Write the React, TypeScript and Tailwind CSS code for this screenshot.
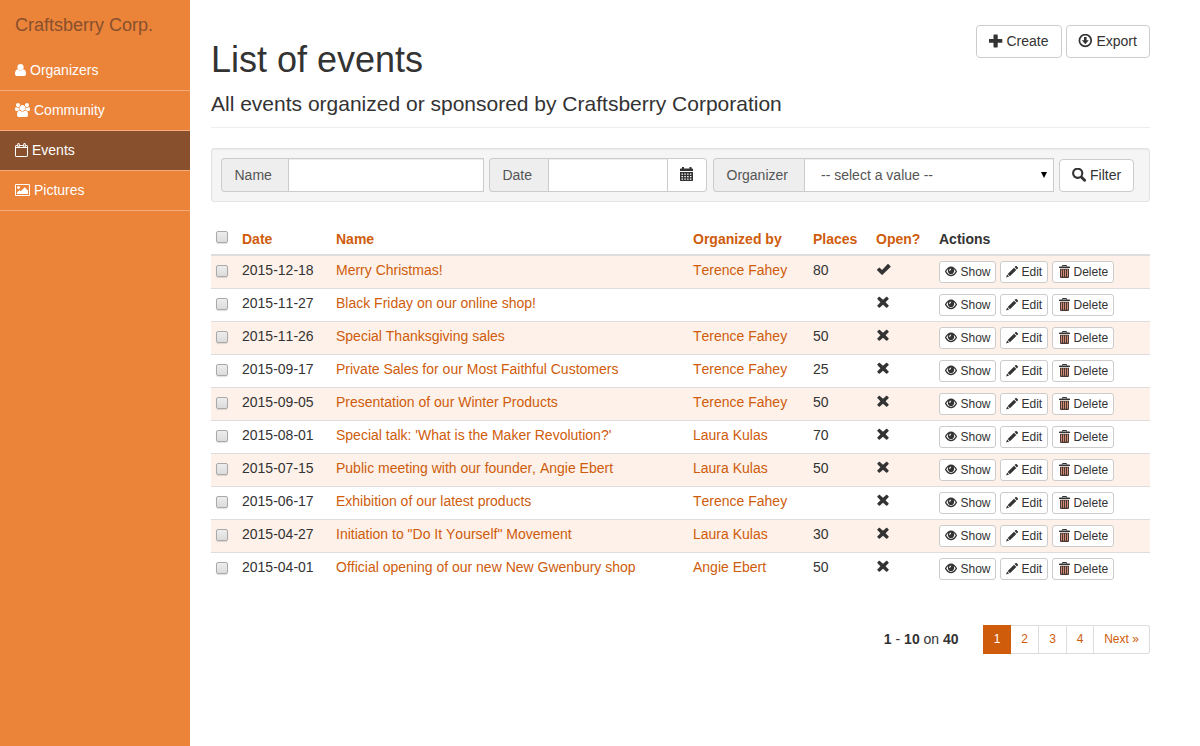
import React from "react";

type Event = { date: string; name: string; by: string; places: string; open?: boolean };

const events: Event[] = [
  { date: "2015-12-18", name: "Merry Christmas!", by: "Terence Fahey", places: "80", open: true },
  { date: "2015-11-27", name: "Black Friday on our online shop!", by: "", places: "" },
  { date: "2015-11-26", name: "Special Thanksgiving sales", by: "Terence Fahey", places: "50" },
  { date: "2015-09-17", name: "Private Sales for our Most Faithful Customers", by: "Terence Fahey", places: "25" },
  { date: "2015-09-05", name: "Presentation of our Winter Products", by: "Terence Fahey", places: "50" },
  { date: "2015-08-01", name: "Special talk: 'What is the Maker Revolution?'", by: "Laura Kulas", places: "70" },
  { date: "2015-07-15", name: "Public meeting with our founder, Angie Ebert", by: "Laura Kulas", places: "50" },
  { date: "2015-06-17", name: "Exhibition of our latest products", by: "Terence Fahey", places: "" },
  { date: "2015-04-27", name: "Initiation to \"Do It Yourself\" Movement", by: "Laura Kulas", places: "30" },
  { date: "2015-04-01", name: "Official opening of our new New Gwenbury shop", by: "Angie Ebert", places: "50" },
];

const UserIcon = () => (
  <svg viewBox="0 0 11 14" className="h-[14px] w-[11px] shrink-0" fill="currentColor">
    <circle cx="5.500" cy="4.200" r="3.100" />
    <path d="M2.700 6.300Q3.900 7.600 5.500 7.600T8.300 6.300Q11 6.600 11 11Q11 13 9.200 13H1.800Q0 13 0 11Q0 6.600 2.700 6.300z" />
  </svg>
);

const UsersIcon = () => (
  <svg viewBox="0 0 1920 1792" className="h-[14px] w-[15px] shrink-0" fill="currentColor">
    <path d="M593 896q-162 5-265 128h-134q-82 0-138-40.5t-56-118.5q0-353 124-353 6 0 43.5 21t97.5 42.5 119 21.5q67 0 133-23-5 37-5 66 0 139 81 256zm1071 637q0 120-73 189.5t-194 69.5h-874q-121 0-194-69.5t-73-189.5q0-53 3.5-103.5t14-109 26.5-108.5 43-97.5 62-81 85.5-53.5 111.5-20q10 0 43 21.5t73 48 107 48 135 21.5 135-21.5 107-48 73-48 43-21.5q61 0 111.5 20t85.5 53.5 62 81 43 97.5 26.5 108.5 14 109 3.5 103.5zm-1024-1277q0 106-75 181t-181 75-181-75-75-181 75-181 181-75 181 75 75 181zm704 384q0 159-112.5 271.5t-271.5 112.5-271.5-112.5-112.5-271.500 112.5-271.500 271.5-112.500 271.5 112.5 112.500 271.500zm576 225q0 78-56 118.5t-138 40.5h-134q-103-123-265-128 81-117 81-256 0-29-5-66 66 23 133 23 59 0 119-21.5t97.5-42.5 43.5-21q124 0 124 353zm-128-609q0 106-75 181t-181 75-181-75-75-181 75-181 181-75 181 75 75 181z" />
  </svg>
);

const CalendarOIcon = () => (
  <svg viewBox="0 0 13 14" className="h-[14px] w-[13px] shrink-0" fill="none" stroke="currentColor">
    <rect x="0.5" y="2.5" width="12" height="11" rx="0.6" />
    <path d="M0.500 4.500H12.500" />
    <path d="M3.500 1.200V3.500M9.500 1.200V3.500" strokeWidth="2.400" strokeLinecap="round" />
    <path d="M3.500 1.200V3.500M9.500 1.200V3.500" stroke="#88502d" strokeWidth="0.700" />
  </svg>
);

const PictureIcon = () => (
  <svg viewBox="0 0 1920 1792" className="h-[14px] w-[15px] shrink-0" fill="currentColor">
    <path d="M640 576q0 80-56 136t-136 56-136-56-56-136 56-136 136-56 136 56 56 136zm1024 384v448h-1408v-192l320-320 160 160 512-512zm96-704h-1600q-13 0-22.5 9.5t-9.5 22.5v1216q0 13 9.5 22.5t22.5 9.500h1600q13 0 22.500-9.500t9.500-22.500v-1216q0-13-9.500-22.500t-22.500-9.500zm160 32v1216q0 66-47 113t-113 47h-1600q-66 0-113-47t-47-113v-1216q0-66 47-113t113-47h1600q66 0 113 47t47 113z" />
  </svg>
);

const PlusIcon = () => (
  <svg viewBox="0 0 14 14" className="h-[14px] w-[14px] shrink-0" fill="currentColor">
    <path d="M5.100 .5h3q.6 0 .6.600v3.900h4q.6 0 .6.600v2.600q0 .6-.6.600h-4v4q0 .6-.6.600h-3q-.6 0-.6-.6v-4h-4q-.6 0-.6-.6v-2.600q0-.6.6-.6h4v-3.900q0-.6.6-.6z" />
  </svg>
);

const DownloadIcon = () => (
  <svg viewBox="0 0 14 14" className="h-[14px] w-[14px] shrink-0">
    <circle cx="7.300" cy="6.500" r="5.900" fill="none" stroke="currentColor" strokeWidth="1.700" />
    <path d="M6 3h2.600v3.300h2.200L7.300 10.300 3.800 6.300h2.200z" fill="currentColor" />
  </svg>
);

const SearchIcon = () => (
  <svg viewBox="0 0 14 14" className="h-[14px] w-[14px] shrink-0" fill="none" stroke="currentColor">
    <circle cx="5.700" cy="5.300" r="4.600" strokeWidth="2.100" />
    <path d="M9.600 9.200L12.600 12.200" strokeWidth="2.900" strokeLinecap="round" />
  </svg>
);

const CalendarIcon = () => (
  <svg viewBox="0 0 14 14" className="h-[14px] w-[14px] shrink-0" fill="currentColor">
    <path d="M0 2.300q0-.8.8-.8H2V0h2v1.500h5.500V0h2v1.500h.7q.8 0 .8.800V4H0z" />
    <path fillRule="evenodd" d="M0 5h13v8.300q0 .7-.7.700H.7q-.7 0-.7-.7zM1.500 6.500v1.200h1.500V6.500zM4.300 6.500v1.200h1.500V6.500zM7.100 6.500v1.200h1.500V6.500zM9.900 6.500v1.200h1.500V6.500zM1.500 9v1.200h1.500V9zM4.300 9v1.200h1.500V9zM7.100 9v1.200h1.500V9zM9.900 9v1.200h1.500V9zM1.500 11.500v1.200h1.500v-1.200zM4.300 11.500v1.200h1.500v-1.200zM7.100 11.500v1.200h1.500v-1.200zM9.900 11.500v1.200h1.500v-1.200z" />
  </svg>
);

const OkIcon = () => (
  <svg viewBox="0 0 14 14" className="h-[14px] w-[15px]" fill="currentColor">
    <path d="M11.800 2.100L14 4.300q.3.300 0 .6L6 12.800q-.4.300-.8 0L.6 8.300q-.3-.4 0-.7l1.900-1.900q.4-.3.700 0l2.400 2.300 5.600-5.900q.3-.3.600 0z" />
  </svg>
);

const RemoveIcon = () => (
  <svg viewBox="0 0 14 14" className="h-[14px] w-[14px]" fill="currentColor">
    <path d="M3.600 1.800L7 4.800 10.400 1.800q.3-.2.600 0l1.700 1.700q.3.300 0 .6L9.600 7.300l3.100 3.100q.3.300 0 .6l-1.700 1.700q-.3.300-.6 0L7 9.700l-3.400 3q-.3.300-.6 0L1.300 11q-.3-.3 0-.6l3.100-3.100L1.300 4.100q-.3-.3 0-.6L3 1.800q.3-.2.600 0z" />
  </svg>
);

const EyeIcon = () => (
  <svg viewBox="0 0 12 12" className="h-[12px] w-[12px] shrink-0">
    <path d="M-.1 5.500Q2.400.4 6 .4T12.100 5.500Q9.400 10.300 6 10.300T-.1 5.500z" fill="currentColor" />
    <path d="M1.300 5.600Q2.100 3.800 3.300 2.900Q2.500 4.400 3 6Q3.900 8.200 6 8.200T9 6Q9.500 4.400 8.700 2.900Q9.900 3.800 10.700 5.600Q8.700 9 6 9T1.300 5.600z" fill="#fff" />
    <path d="M4.100 4.500Q4.400 2.700 6.200 2.500L6 3.600Q5.100 4 5.100 5.300z" fill="#fff" />
  </svg>
);

const PencilIcon = () => (
  <svg viewBox="0 0 12 12" className="h-[12px] w-[12px] shrink-0" fill="currentColor">
    <path d="M9.700 0q.4-.3.800 0l1.500 1.500q.3.400 0 .8l-1.100 1.100-2.300-2.300zM8 1.700l2.300 2.300-6.400 6.200L1.700 7.900zM1.200 8.600l1.900 2L0 11.600z" />
  </svg>
);

const TrashIcon = () => (
  <svg viewBox="0 0 12 14" className="mt-[-2px] h-[14px] w-[12px] shrink-0">
    <path d="M4.500 2.500V1.500h4V2.500" fill="none" stroke="currentColor" />
    <path d="M1 3.900V3l.7-.5h9.600l.7.500v.9z" fill="currentColor" />
    <path d="M2 4.800h9V13q0 .9-1 .9H3q-1 0-1-.9z" fill="#4a3832" />
    <path d="M3.500 5.500v7.200M5.500 5.500v7.200M7.500 5.500v7.200M9.500 5.500v7.200" stroke="#d08a76" strokeWidth="1" />
  </svg>
);

const nav = [
  { label: "Organizers", icon: <UserIcon /> },
  { label: "Community", icon: <UsersIcon /> },
  { label: "Events", icon: <CalendarOIcon />, active: true },
  { label: "Pictures", icon: <PictureIcon /> },
];

const Checkbox = () => (
  <span
    role="checkbox"
    aria-checked="false"
    className="block h-[12px] w-[12px] rounded-[2px] border border-[#a9a9a9] bg-linear-to-b from-[#ededed] to-[#dcdcdc] shadow-[0_1px_1px_rgba(0,0,0,0.12)]"
  />
);

const RowButton = ({ icon, label, width }: { icon: React.ReactNode; label: string; width: string }) => (
  <button
    className={`flex h-[22px] items-center gap-[3.500px] rounded-[3px] border border-[#ccc] bg-white pl-[5px] text-[12px] leading-[18px] whitespace-nowrap text-[#333] ${width}`}
  >
    {icon}
    {label}
  </button>
);

export default function App() {
  return (
    <div className="flex h-[746px] w-[1200px] overflow-hidden bg-white font-['Liberation_Sans',Arial,sans-serif] text-[14px] leading-5 text-[#333] [font-kerning:none]">
      <aside className="w-[190px] shrink-0 bg-[#eb8339] text-white">
        <div className="h-[51px] px-[15px] pt-[15px] text-[18px] leading-5 text-[#88502d]">Craftsberry Corp.</div>
        <nav>
          {nav.map((n) => (
            <a
              key={n.label}
              className={`flex h-10 items-center gap-1 border-b border-[#f6ab7a] px-[15px] pb-[2px] ${n.active ? "bg-[#88502d]" : ""}`}
            >
              {n.icon}
              {n.label}
            </a>
          ))}
        </nav>
      </aside>

      <main className="flex w-[960px] flex-col pl-[21px]">
        <header className="flex h-[128px] justify-between border-b border-[#eee]">
          <div className="pt-[40px]">
            <h1 className="text-[36px] leading-10">List of events</h1>
            <p className="mt-[9px] text-[21px] leading-[30px]">All events organized or sponsored by Craftsberry Corporation</p>
          </div>
          <div className="flex gap-1 pt-[25px]">
            <button className="flex h-[33px] w-[86px] items-center gap-1 rounded-[4px] border border-[#ccc] pb-px pl-[11.500px]">
              <PlusIcon />
              Create
            </button>
            <button className="flex h-[33px] w-[84px] items-center gap-1 rounded-[4px] border border-[#ccc] pb-px pl-[11.400px]">
              <DownloadIcon />
              Export
            </button>
          </div>
        </header>

        <form className="mt-5 flex h-[54px] rounded-[3px] border border-[#e3e3e3] bg-[#f5f5f5] p-[9px] text-[#555] shadow-[inset_0_1px_1px_rgba(0,0,0,0.05)]">
          <div className="flex h-[34px] w-[263px]">
            <label className="flex w-[67px] items-center rounded-l-[4px] border border-r-0 border-[#ccc] bg-[#eee] pl-[12.500px]">Name</label>
            <div className="flex-1 border border-[#ccc] bg-white shadow-[inset_0_1px_1px_rgba(0,0,0,0.075)]" />
          </div>
          <div className="ml-[5px] flex h-[34px] w-[218px]">
            <label className="flex w-[59px] items-center rounded-l-[4px] border border-r-0 border-[#ccc] bg-[#eee] pl-[12.400px]">Date</label>
            <div className="flex-1 border border-[#ccc] bg-white shadow-[inset_0_1px_1px_rgba(0,0,0,0.075)]" />
            <button type="button" aria-label="Pick a date" className="flex w-[39px] justify-center rounded-r-[4px] border border-l-0 border-[#ccc] bg-white pt-[8px] text-[#333]">
              <CalendarIcon />
            </button>
          </div>
          <div className="ml-[6px] flex h-[34px] w-[341px]">
            <label className="flex w-[91px] items-center rounded-l-[4px] border border-r-0 border-[#ccc] bg-[#eee] pl-[12.500px]">Organizer</label>
            <div className="flex flex-1 items-center justify-between border border-[#ccc] bg-white pr-[6px] pl-4 shadow-[inset_0_1px_1px_rgba(0,0,0,0.075)]">
              -- select a value --
              <svg viewBox="0 0 6 6" className="h-[6px] w-[6px]"><path d="M0 0h6L3 6z" fill="#000" /></svg>
            </div>
          </div>
          <button type="button" className="mt-px ml-[5px] flex h-[33px] w-[75px] items-center gap-1 rounded-[4px] border border-[#ccc] bg-white pb-px pl-[12px] text-[#333]">
            <SearchIcon />
            Filter
          </button>
        </form>

        <table className="mt-[19px] w-[939px] table-fixed border-separate border-spacing-0">
          <colgroup>
            <col className="w-[26px]" />
            <col className="w-[94px]" />
            <col className="w-[357px]" />
            <col className="w-[120px]" />
            <col className="w-[63px]" />
            <col className="w-[63px]" />
            <col className="w-[216px]" />
          </colgroup>
          <thead>
            <tr className="h-[35px] text-left [&>th]:border-b-2 [&>th]:border-[#ddd] [&>th]:px-[5px] [&>th]:pt-[8px] [&>th]:align-top [&>th]:text-[#cf5c0b]">
              <th><div className="pt-[2px]"><Checkbox /></div></th>
              <th>Date</th>
              <th>Name</th>
              <th>Organized by</th>
              <th>Places</th>
              <th>Open?</th>
              <th><span className="text-[#333]">Actions</span></th>
            </tr>
          </thead>
          <tbody>
            {events.map((e, i) => (
              <tr
                key={e.date}
                className={`[&>td]:px-[5px] [&>td]:align-top ${i === 0 ? "h-[32px]" : "h-[33px] [&>td]:border-t [&>td]:border-[#ddd]"} ${i % 2 === 0 ? "bg-[#fdf1e9]" : ""}`}
              >
                <td className="pt-[9px]"><Checkbox /></td>
                <td className="pt-[4px]">{e.date}</td>
                <td className="pt-[4px] text-[#cf5c0b]">{e.name}</td>
                <td className="pt-[4px] text-[#cf5c0b]">{e.by}</td>
                <td className="pt-[4px]">{e.places}</td>
                <td className="pt-[6px]">{e.open ? <OkIcon /> : <RemoveIcon />}</td>
                <td className="pt-[5px]">
                  <div className="flex gap-1">
                    <RowButton icon={<EyeIcon />} label="Show" width="w-[57px]" />
                    <RowButton icon={<PencilIcon />} label="Edit" width="w-[48px]" />
                    <RowButton icon={<TrashIcon />} label="Delete" width="w-[62px]" />
                  </div>
                </td>
              </tr>
            ))}
          </tbody>
        </table>

        <footer className="mt-[40px] flex items-center justify-end">
          <div className="mr-[24.400px] mb-[2px]"><b>1</b> - <b>10</b> on <b>40</b></div>
          <div className="flex h-[29px] text-[12px] leading-[27px] text-[#cf5c0b] [&>a]:border-y [&>a]:border-r [&>a]:border-[#ddd] [&>a]:text-center">
            <span className="w-[28px] bg-[#cf5c0b] text-center leading-[29px] text-white">1</span>
            <a className="w-[28px]">2</a>
            <a className="w-[28px]">3</a>
            <a className="w-[27px]">4</a>
            <a className="w-[56px] rounded-r-[3px]">Next »</a>
          </div>
        </footer>
      </main>
    </div>
  );
}
